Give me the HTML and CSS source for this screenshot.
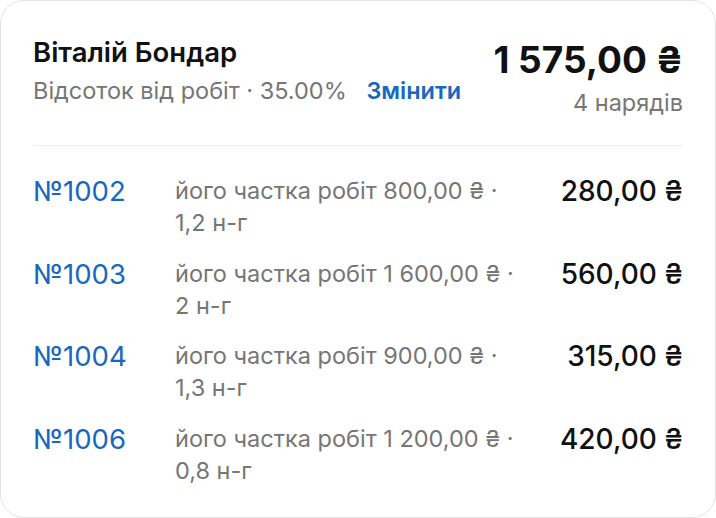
FILE: index.html
```html
<!DOCTYPE html>
<html lang="uk">
<head>
    <meta charset="UTF-8">
    <meta name="viewport" content="width=device-width, initial-scale=1.0">
    <title>Відсоток майстра</title>
    <link rel="stylesheet" href="styles.css">
</head>
<body>
    <div class="card">
        <div class="card-header">
            <div class="master">
                <h2 class="master-name">Віталій Бондар</h2>
                <p class="master-rate">Відсоток від робіт · 35.00% <a href="#" class="edit-link">Змінити</a></p>
            </div>
            <div class="total">
                <div class="total-sum">1&nbsp;575,00 ₴</div>
                <div class="total-count">4 нарядів</div>
            </div>
        </div>

        <!-- наряди майстра -->
        <div class="orders">
            <a href="#" class="order-num">№1002</a>
            <div class="order-desc">його частка робіт 800,00 ₴ · 1,2 н-г</div>
            <div class="order-sum">280,00 ₴</div>

            <a href="#" class="order-num">№1003</a>
            <div class="order-desc">його частка робіт 1&nbsp;600,00 ₴ · 2 н-г</div>
            <div class="order-sum">560,00 ₴</div>

            <a href="#" class="order-num">№1004</a>
            <div class="order-desc">його частка робіт 900,00 ₴ · 1,3 н-г</div>
            <div class="order-sum">315,00 ₴</div>

            <a href="#" class="order-num">№1006</a>
            <div class="order-desc">його частка робіт 1&nbsp;200,00 ₴ · 0,8 н-г</div>
            <div class="order-sum">420,00 ₴</div>
        </div>
    </div>
</body>
</html>
```

FILE: styles.css
```css
body {
    margin: 0;
    background-color: #ffffff;
    font-family: Inter, "Noto Sans", sans-serif;
    color: #111111;
}

.card {
    box-sizing: border-box;
    width: 716px;
    height: 518px;
    padding: 37px 32px 0 32px;
    background-color: #ffffff;
    border: 1px solid #e4e4e4;
    border-radius: 24px;
}

.card-header {
    display: flex;
    justify-content: space-between;
    align-items: flex-start;
    padding-bottom: 28px;
    border-bottom: 1px solid #ececec;
}

.master-name {
    margin: 0;
    font-size: 27.5px;
    font-weight: 600;
    line-height: 28px;
}

.master-rate {
    margin: 11px 0 0 0;
    font-size: 23.5px;
    line-height: 28px;
    color: #767676;
}

.edit-link {
    margin-left: 13px;
    color: #1867c0;
    font-weight: 600;
    text-decoration: none;
}

.total {
    text-align: right;
    margin-top: 2px;
}

.total-sum {
    font-size: 37px;
    font-weight: 700;
    line-height: 40px;
}

.total-count {
    margin-top: 9px;
    font-size: 23.5px;
    line-height: 28px;
    color: #767676;
}

.orders {
    display: grid;
    grid-template-columns: 142px 355px 1fr;
    row-gap: 18.5px;
    padding-top: 29px;
}

.order-num {
    font-size: 27.5px;
    line-height: 32px;
    color: #1867c0;
    text-decoration: none;
}

.order-desc {
    font-size: 23.5px;
    line-height: 32px;
    color: #767676;
}

.order-sum {
    font-size: 28px;
    font-weight: 500;
    line-height: 32px;
    text-align: right;
}
```
